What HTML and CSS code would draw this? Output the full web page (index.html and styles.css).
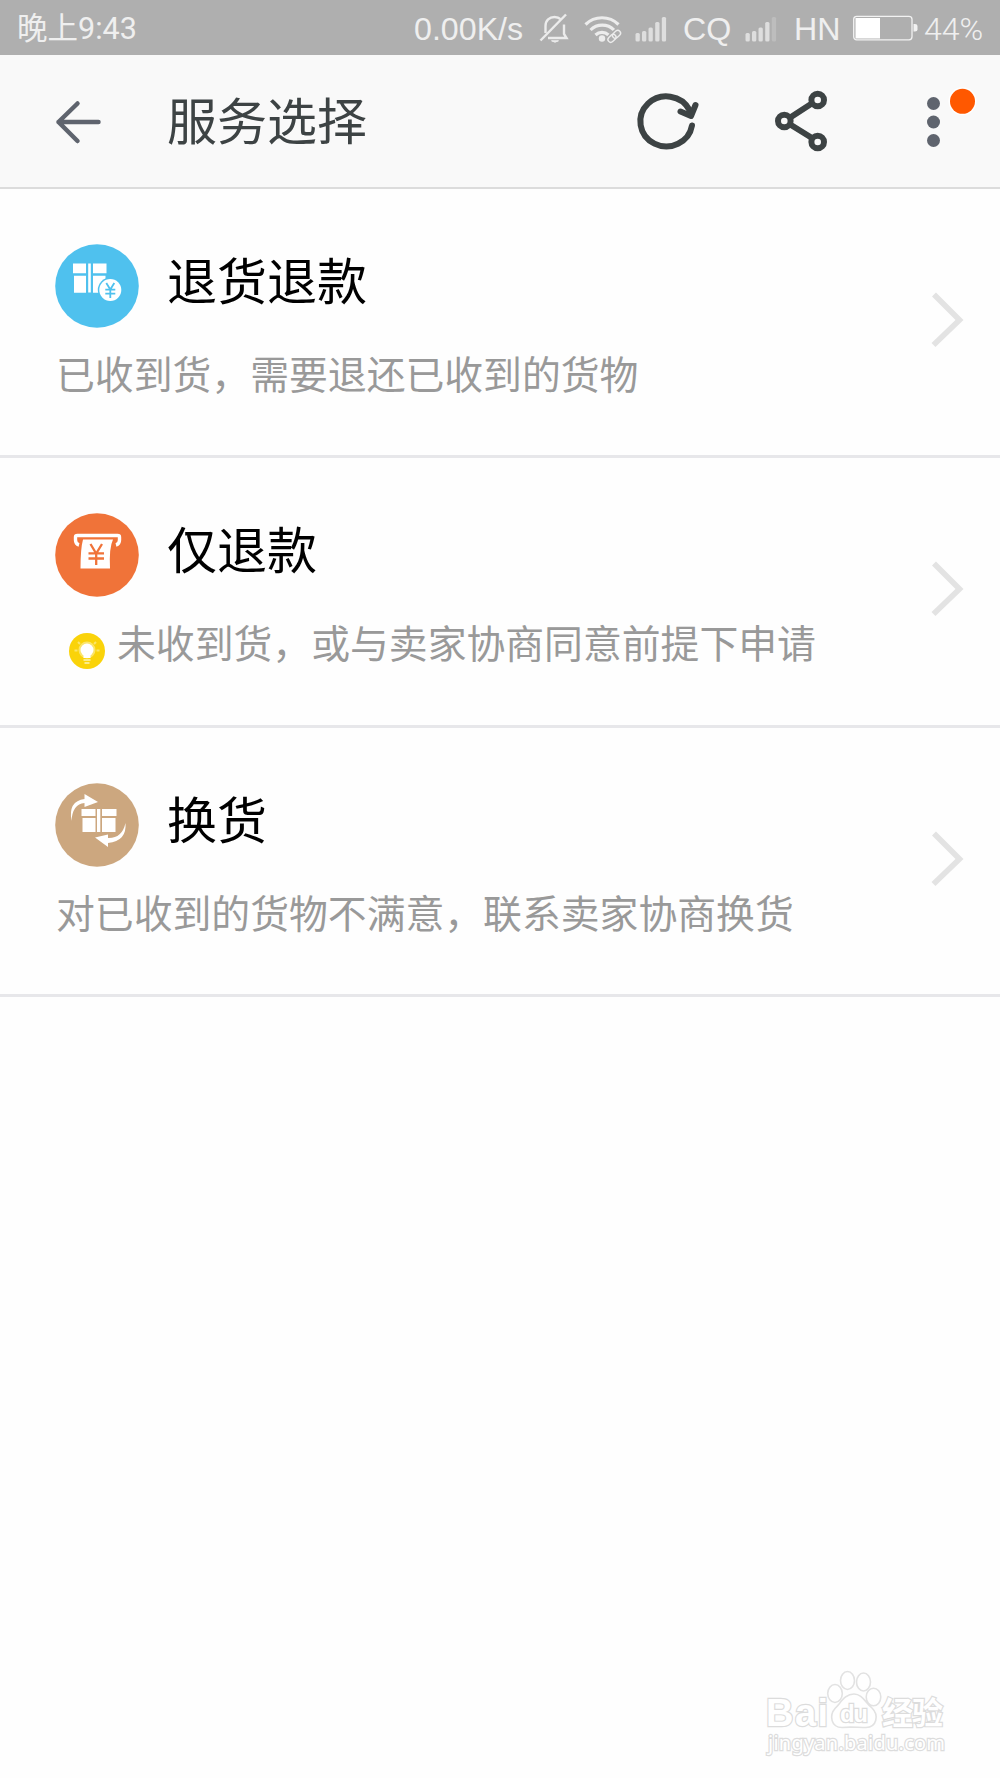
FILE: index.html
```html
<!DOCTYPE html>
<html lang="zh-CN">
<head>
<meta charset="utf-8">
<title>服务选择</title>
<link rel="stylesheet" href="styles.css">
</head>
<body>
<div class="statusbar">
  <span class="clock">晚上9:43</span>
  <span>0.00K/s</span>
  <svg width="30" height="32" viewBox="0 0 30 32" fill="none" stroke="#ececec" stroke-width="2.400"><path d="M8 25h18.500l-2.500-4v-9.500M5.500 20v-7c0-5.500 4-9 9-9 2.500 0 4.500.700 6 2.200"/><path d="M0.500 27.500 26 1.500"/><path d="M11.500 27.800h7q-3.500 2.800-7 0z" fill="#ececec" stroke-width="1"/></svg>
  <svg width="40" height="32" viewBox="0 0 40 32" fill="none" stroke="#ececec" stroke-width="3.200"><path d="M1.500 11.500a23.500 23.500 0 0 1 33 0M6.500 17a16.500 16.500 0 0 1 23.500 0M11.500 22a9.500 9.500 0 0 1 13 0"/><circle cx="18" cy="25.500" r="3.200" fill="#ececec" stroke="none"/><g stroke="#afafaf" stroke-width="4"><rect x="28" y="18.500" width="9" height="5.600" rx="2.800" transform="rotate(-43 32.500 21.300)"/><rect x="23.500" y="22.500" width="9" height="5.600" rx="2.800" transform="rotate(-43 28 25.300)"/></g><g stroke-width="1.400"><rect x="28" y="18.500" width="9" height="5.600" rx="2.800" transform="rotate(-43 32.500 21.300)"/><rect x="23.500" y="22.500" width="9" height="5.600" rx="2.800" transform="rotate(-43 28 25.300)"/></g></svg>
  <svg width="34" height="32" viewBox="0 0 34 32" fill="#dedede"><rect x="0.500" y="20" width="4.300" height="8.500" rx="1.500"/><rect x="7" y="18" width="4.300" height="10.500" rx="1.500"/><rect x="13.500" y="14.500" width="4.300" height="14" rx="1.500"/><rect x="20.200" y="9" width="4.300" height="19.500" rx="1.500"/><rect x="26.800" y="4" width="4.300" height="24.500" rx="1.500"/></svg>
  <span>CQ</span>
  <svg width="34" height="32" viewBox="0 0 34 32" fill="#dedede"><rect x="0.500" y="20" width="4.300" height="8.500" rx="1.500"/><rect x="7" y="18" width="4.300" height="10.500" rx="1.500"/><rect x="13.500" y="14.500" width="4.300" height="14" rx="1.500"/><rect x="20.200" y="9" width="4.300" height="19.500" rx="1.500"/><rect x="26.800" y="4" width="4.300" height="24.500" rx="1.500" fill="#bdbdbd"/></svg>
  <span>HN</span>
  <svg width="66" height="32" viewBox="0 0 66 32"><rect x="0.700" y="3.300" width="58.300" height="23.500" rx="3" fill="none" stroke="#f2f2f2" stroke-width="1.300"/><path d="M2.500 5h24.500v20.500h-24.500z" fill="#fff"/><path d="M60.500 11h1.500q2.500 0 2.500 2v3.500q0 2-2.500 2h-1.500z" fill="#f2f2f2"/></svg>
  <span class="charge">44%</span>
</div>

<header class="appbar">
  <svg width="46" height="44" viewBox="0 0 46 44" fill="none" stroke="#5f646e" stroke-width="4.500" stroke-linecap="round" stroke-linejoin="round"><path d="M23.500 3.500 4.500 22l19 19M4.500 22h40"/></svg>
  <h1 class="appbar-title">服务选择</h1>
  <svg width="64" height="64" viewBox="0 0 64 64" fill="none" stroke="#3d4344" stroke-width="6" stroke-linecap="round" stroke-linejoin="round"><path d="M55 35.500A26 25 0 1 1 52.500 20"/><path d="M43.500 21.500 54 26 58.500 15"/></svg>
  <svg width="56" height="64" viewBox="0 0 56 64" fill="none" stroke="#3d4344" stroke-width="6"><path d="M16 27 36 14M16 35 37 48"/><circle cx="9.300" cy="31" r="6.300"/><circle cx="42.700" cy="10" r="6.300"/><circle cx="42.700" cy="52" r="6.300"/></svg>
  <svg width="54" height="64" viewBox="0 0 54 64" fill="#5f646e"><circle cx="8.500" cy="13.500" r="6.500"/><circle cx="8.500" cy="32" r="6.500"/><circle cx="8.500" cy="50.500" r="6.500"/><circle cx="37.500" cy="11.300" r="14" fill="#fff"/><circle cx="37.500" cy="11.300" r="12.500" fill="#ff5800"/></svg>
</header>

<main class="services">
  <section class="service">
    <div class="service-body">
      <div class="service-head">
        <svg width="84" height="84" viewBox="0 0 84 84"><circle cx="42" cy="42" r="41.800" fill="#4fc1ee"/><path d="M18 19.500h13v9.700h-13zM33.200 19.500h2.600v29h-2.600zM38 19.500h13.500v9.700h-13.500zM19 31.700h12v17h-12zM38 31.700h12.500v17h-12.500z" fill="#fff"/><circle cx="55.300" cy="46" r="12.500" fill="#4fc1ee"/><circle cx="55.300" cy="46" r="11" fill="#fff"/><path d="M51.300 39l4 6.500 4-6.500M55.300 45v9M50.300 45.700h10M50.300 49.700h10" stroke="#4fc1ee" stroke-width="1.800" fill="none"/></svg>
        <h2 class="service-title">退货退款</h2>
      </div>
      <p class="service-desc">已收到货，需要退还已收到的货物</p>
    </div>
    <svg class="chevron" width="36" height="60" viewBox="0 0 36 60" fill="none" stroke="#e3e3e3" stroke-width="5.600"><path d="M4 4.500 29.500 30 3.500 55"/></svg>
  </section>
  <section class="service">
    <div class="service-body">
      <div class="service-head">
        <svg width="84" height="84" viewBox="0 0 84 84"><circle cx="42" cy="42" r="41.800" fill="#f07339"/><path d="M24 32q-3.500-1-3.500-5v-3q0-1.500 2-1.500h40q2 0 2 1.500v3q0 4-3.500 5" fill="none" stroke="#fff" stroke-width="3.400"/><path d="M28 26.500h30q-4 8-3 29h-29.500q0-20 2.500-29z" fill="#fff"/><path d="M35.500 31l5.700 9.500L47 31M41.200 40v12M33.500 40.300h15.500M33.500 45.500h15.500" stroke="#f07339" stroke-width="2.300" fill="none"/></svg>
        <h2 class="service-title">仅退款</h2>
      </div>
      <p class="service-desc service-desc-tip"><svg width="38" height="38" viewBox="0 0 38 38"><circle cx="19" cy="19" r="18" fill="#fad30a"/><circle cx="19" cy="18" r="8.500" fill="#fbe56a"/><circle cx="19" cy="18" r="6.500" fill="#fff"/><path d="M15.500 22h7v4h-7z" fill="#fff"/><path d="M15.500 28h7M16.500 31h5" stroke="#fbec8a" stroke-width="1.800"/><path d="M6.500 18.500h3M28.500 18.500h3M10 10l2 2M28 10l-2 2" stroke="#fbe56a" stroke-width="2"/></svg><span>未收到货，或与卖家协商同意前提下申请</span></p>
    </div>
    <svg class="chevron" width="36" height="60" viewBox="0 0 36 60" fill="none" stroke="#e3e3e3" stroke-width="5.600"><path d="M4 4.500 29.500 30 3.500 55"/></svg>
  </section>
  <section class="service">
    <div class="service-body">
      <div class="service-head">
        <svg width="84" height="84" viewBox="0 0 84 84"><circle cx="42" cy="42" r="41.800" fill="#cca77f"/><path d="M26.500 26h14v7h-14zM42 26h3.300v23h-3.300zM47 26h14.500v7h-14.500zM27.500 35h13v14h-13zM47 35h13.500v14h-13.500z" fill="#fff"/><path d="M16.500 38q-3.500-20 13-22v-5l13.500 8-13.500 5v-4q-12 1-13 18z" fill="#fff"/><path d="M70.500 40q1.500 18-17.500 20v4l-13-9.500 13-3v3.500q14 .5 17.500-15z" fill="#fff"/></svg>
        <h2 class="service-title">换货</h2>
      </div>
      <p class="service-desc">对已收到的货物不满意，联系卖家协商换货</p>
    </div>
    <svg class="chevron" width="36" height="60" viewBox="0 0 36 60" fill="none" stroke="#e3e3e3" stroke-width="5.600"><path d="M4 4.500 29.500 30 3.500 55"/></svg>
  </section>
</main>

<svg class="watermark" width="240" height="128" viewBox="0 0 240 128">
  <g fill="#fff" stroke="#e2e2e2" stroke-width="1.600">
    <ellipse cx="95" cy="43.500" rx="7.300" ry="9"/><ellipse cx="107.500" cy="30.500" rx="7" ry="9"/><ellipse cx="123.500" cy="32" rx="7" ry="9"/><ellipse cx="133.500" cy="47" rx="7.300" ry="8.700"/>
    <path d="M114 44c8 0 11 8 18 14 7 7 5 19-6 19.500-8 0-16-1-24 0-11 0-13-12-7-19 6-6 10-14.500 19-14.500z"/>
  </g>
  <g class="watermark-text">
    <text class="wm-latin" x="26" y="76" font-size="38" textLength="62">Bai</text>
    <text class="wm-latin" x="100" y="72" font-size="24" textLength="28">du</text>
    <text class="wm-cjk" x="142" y="74" font-size="31" textLength="61">经验</text>
    <text class="wm-url" x="28" y="100" font-size="20" textLength="177">jingyan.baidu.com</text>
  </g>
</svg>
</body>
</html>
```
FILE: styles.css
```css
* {
  box-sizing: border-box;
}

body {
  position: relative;
  width: 1000px;
  min-height: 1778px;
  margin: 0;
  background: #fefefe;
  font-family: Roboto, "Noto Sans CJK SC", sans-serif;
}

h1, h2, p {
  margin: 0;
  font-weight: 400;
}

svg {
  display: block;
  flex: none;
  overflow: visible;
}

.statusbar {
  display: grid;
  grid-template-columns: 397px 126px 44px 51px 48px 62px 49px 59px 72px auto;
  align-items: center;
  height: 55px;
  padding-left: 17px;
  background: #afafaf;
  color: #efefef;
  font-family: "Liberation Sans", sans-serif;
  font-size: 32.2px;
  line-height: 55px;
  white-space: nowrap;
}

.statusbar > span {
  padding-top: 2px;
}

.statusbar .clock {
  font-family: Roboto, "Noto Sans CJK SC", sans-serif;
  font-size: 30.5px;
}

.statusbar > .clock {
  padding-top: 0;
}

.statusbar .charge {
  font-family: Roboto, sans-serif;
  font-size: 32px;
  font-weight: 300;
  margin-left: -1px;
}

.appbar {
  display: flex;
  align-items: center;
  height: 134px;
  padding: 2px 21px 0 54px;
  background: #f9f9f9;
  border-bottom: 2px solid #dcdcdc;
}

.appbar-title {
  flex: 1;
  padding: 0 0 9px 67px;
  color: #3d4344;
  font-family: "Noto Sans CJK SC", sans-serif;
  font-size: 50px;
  line-height: 60px;
}

.appbar-title + svg {
  margin-right: 74px;
}

.appbar-title + svg + svg {
  margin-right: 94px;
}

.service {
  display: flex;
  justify-content: space-between;
  height: 269.4px;
  padding: 55px 34px 0 55px;
  border-bottom: 3px solid #e7e7ea;
  font-family: "Noto Sans CJK SC", sans-serif;
}

.service-head {
  display: flex;
  gap: 28px;
}

.service-title {
  color: #000;
  font-size: 50px;
  line-height: 68px;
}

.service-desc {
  display: flex;
  margin-top: 19px;
  padding-left: 1px;
  color: #999;
  font-size: 38.85px;
  line-height: 50px;
  white-space: nowrap;
}

.service-desc-tip {
  gap: 11px;
  padding-left: 13px;
}

.service-desc-tip svg {
  margin-top: 16px;
}

.chevron {
  margin-top: 46px;
}

.watermark {
  position: absolute;
  left: 740px;
  top: 1650px;
}

.watermark-text {
  fill: #fff;
  stroke: #dcdcdc;
  stroke-width: 2.4px;
  paint-order: stroke;
}

.wm-latin {
  font-family: "Liberation Sans", sans-serif;
  font-weight: 700;
}

.wm-cjk {
  font-family: "Noto Sans CJK SC", sans-serif;
  font-weight: 700;
}

.wm-url {
  font-family: "Noto Sans", sans-serif;
}
```
